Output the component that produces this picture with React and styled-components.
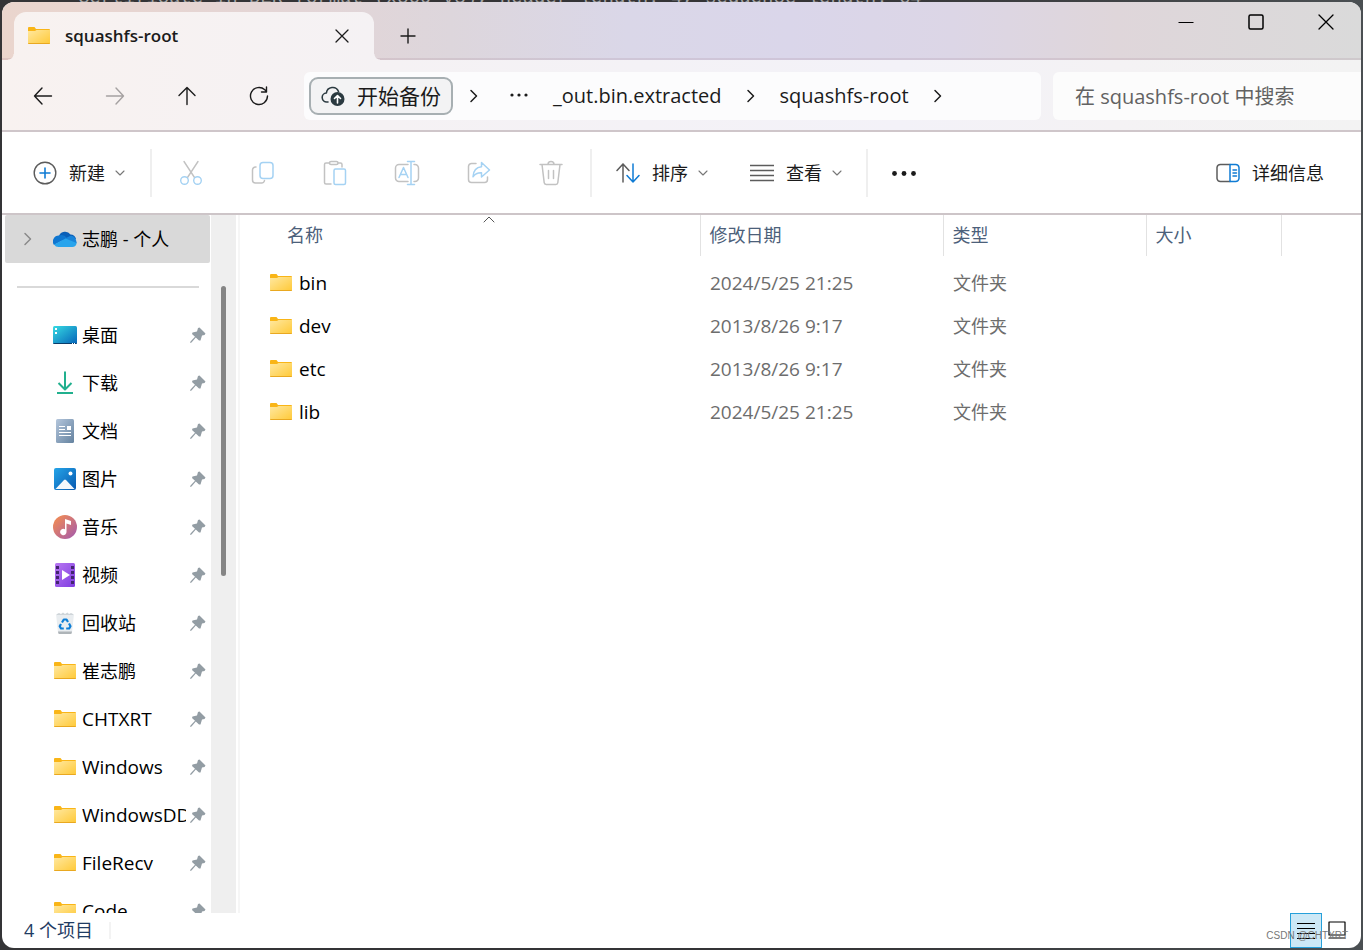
import React, { useState } from 'react';
import styled, { createGlobalStyle } from 'styled-components';

const GlobalStyle = createGlobalStyle`
* {
  box-sizing: border-box;
}
body {
  margin: 0;
  font-family: 'Open Sans', 'Noto Sans CJK SC', sans-serif;
  font-size: 18px;
  line-height: 24px;
  color: #1b1b1b;
}
button, input {
  font: inherit;
  color: inherit;
}
svg {
  display: block;
  flex: none;
}
`;

const Desktop = styled.div`
position: relative;
display: flex;
height: 100vh;
padding: 2px;
overflow: hidden;
background: linear-gradient(90deg, #343436 60%, #4a4f52);
`;

const TerminalLine = styled.div`
position: absolute;
top: -12px;
left: 78px;
font-family: 'Liberation Mono', monospace;
font-size: 19px;
line-height: 20px;
white-space: nowrap;
color: #a5a5a5;
`;

const Window = styled.div`
position: relative;
flex: 1;
min-width: 0;
display: flex;
flex-direction: column;
overflow: hidden;
border-radius: 12px;
background: #fff;
`;

const TabStrip = styled.header`
display: flex;
height: 58px;
padding: 10px 0 0 12px;
background: linear-gradient(90deg, #ead5cd 0%, #e3d5d6 22%, #ddd6dc 33%, #dad7e8 46%, #dad6ea 58%, #dcd6e6 70%, #dfd6da 82%, #dadada 100%);
box-shadow: inset 0 -2px rgba(150, 110, 130, 0.16);
`;

const Tab = styled.div`
position: relative;
display: flex;
align-items: center;
width: 360px;
padding: 0 12px 0 13px;
border-radius: 12px 12px 0 0;
background: linear-gradient(90deg, #f8f2f0, #f5f2f4);
&::before, &::after {
  content: '';
  position: absolute;
  bottom: 0;
  width: 6px;
  height: 6px;
}
&::before {
  right: 100%;
  background: radial-gradient(circle at 0 0, transparent 5px, #f8f2f0 6px);
}
&::after {
  left: 100%;
  background: radial-gradient(circle at 100% 0, transparent 5px, #f5f2f4 6px);
}
`;

const TabTitle = styled.span`
flex: 1;
margin-left: 14px;
font-size: 17px;
font-weight: 600;
`;

const IconButton = styled.button`
display: flex;
align-items: center;
justify-content: center;
flex: none;
width: ${({ $width }) => $width || 40}px;
height: ${({ $height }) => $height || 40}px;
padding: 0;
border: 0;
background: none;
`;

const Caption = styled.div`
display: flex;
margin-left: auto;
margin-top: -10px;
`;

const NavBar = styled.nav`
display: flex;
align-items: center;
height: 72px;
padding: 2px 0 0 5px;
border-bottom: 2px solid #cfc6ca;
background: linear-gradient(90deg, #f8f2f0 0%, #f5f2f4 28%, #f3f2f8 66%, #f4f2f4 82%, #f3f3f3 100%);
`;

const Address = styled.div`
flex: 1;
min-width: 0;
display: flex;
align-items: center;
height: 48px;
margin: 0 12px 0 9px;
padding-left: 5px;
border-radius: 6px;
overflow: hidden;
white-space: nowrap;
background: #fcfcfd;
`;

const Backup = styled.button`
display: flex;
align-items: center;
gap: 10px;
height: 38px;
padding: 0 10px;
border: 2px solid #a7afb2;
border-radius: 9px;
font-size: 21px;
background: #f3f3f4;
`;

const Crumb = styled.a`
margin: 0 10px;
font-size: 20px;
line-height: 28px;
color: inherit;
text-decoration: none;
`;

const Search = styled.input`
width: 308px;
height: 48px;
padding: 0 22px;
border: 0;
border-radius: 6px 0 0 6px;
font-size: 20px;
background: #fcfcfc;
&::placeholder {
  color: #626262;
  opacity: 1;
}
`;

const Toolbar = styled.div`
display: flex;
align-items: center;
height: 83px;
padding: 0 25px 0 19px;
border-bottom: 2px solid #cdc5c8;
background: #fff;
`;

const Command = styled.button`
display: flex;
align-items: center;
gap: 12px;
height: 48px;
padding: 0 12px;
border: 0;
white-space: nowrap;
background: none;
`;

const ViewCommand = styled(Command)`
margin-left: 18px;
`;

const DropCaret = styled.span`
margin-left: -2px;
`;

const Separator = styled.span`
width: 2px;
height: 48px;
margin: 0 ${({ $right }) => $right}px 0 ${({ $left }) => $left}px;
background: #efefef;
`;

const Spacer = styled.span`
flex: 1;
`;

const Body = styled.div`
flex: 1;
min-height: 0;
display: flex;
`;

const Sidebar = styled.aside`
display: flex;
flex: none;
width: 238px;
overflow: hidden;
border-right: 2px solid #f6f6f6;
`;

const Tree = styled.ul`
flex: 1;
min-width: 0;
margin: 0;
padding: 0 1px 0 3px;
list-style: none;
`;

const TreeItem = styled.li`
display: flex;
align-items: center;
height: 48px;
padding: 0 4px 0 18px;
border-radius: 2px;
background: ${({ $selected }) => ($selected ? '#d9d9d9' : 'none')};
`;

const TreeLink = styled.a`
flex: 1;
min-width: 0;
display: flex;
align-items: center;
gap: 5px;
margin: 0 4px 0 18px;
font-size: ${({ $latin }) => ($latin ? 19 : 18)}px;
color: #000;
text-decoration: none;
`;

const TreeLabel = styled.span`
flex: 1;
overflow: hidden;
white-space: nowrap;
`;

const TreeArrow = styled.span`
width: 12px;
`;

const TreeDivider = styled.li`
height: 48px;
padding: 23px 11px 0 12px;
&::before {
  content: '';
  display: block;
  height: 2px;
  background: #d9d9d9;
}
`;

const ScrollTrack = styled.div`
width: 25px;
margin-right: 2px;
padding: 71px 10px 0;
background: #efefef;
`;

const ScrollThumb = styled.div`
height: 290px;
border-radius: 3px;
background: #858585;
`;

const Main = styled.main`
flex: 1;
min-width: 0;
overflow: hidden;
`;

const FileTable = styled.table`
width: 100%;
table-layout: fixed;
border-collapse: collapse;
`;

const Col = styled.col`
width: ${({ $width }) => ($width ? `${$width}px` : 'auto')};
`;

const HeadCell = styled.th`
position: relative;
height: 41px;
padding: 0 0 2px ${({ $first }) => ($first ? 47 : 9)}px;
border-right: ${({ $last }) => ($last ? '0' : '1px solid #e2e2e2')};
text-align: left;
font-weight: 400;
color: #4c607a;
`;

const SortMark = styled.span`
position: absolute;
top: 1px;
left: 39px;
right: 0;
display: flex;
justify-content: center;
`;

const HeadGap = styled.tr`
height: 5px;
`;

const Cell = styled.td`
height: 43px;
padding: 0 0 0 ${({ $first }) => ($first ? 29 : 10)}px;
font-size: ${({ $latin }) => ($latin ? 19 : 18)}px;
white-space: nowrap;
color: #6d6d6d;
`;

const FileName = styled.a`
display: flex;
align-items: center;
gap: 6px;
color: #000;
text-decoration: none;
`;

const StatusBar = styled.footer`
display: flex;
align-items: center;
height: 35px;
padding: 0 9px 0 22px;
color: #1f3c63;
`;

const StatusText = styled.span`
padding-bottom: 2px;
`;

const StatusSeparator = styled.span`
width: 2px;
height: 17px;
margin-left: 16px;
background: #f3f3f3;
`;

const ViewButton = styled.button`
display: flex;
align-items: center;
justify-content: center;
width: ${({ $active }) => ($active ? 32 : 30)}px;
height: 35px;
padding: 0 0 2px;
border: ${({ $active }) => ($active ? '1px solid #26a0da' : '0')};
background: ${({ $active }) => ($active ? '#cce8f6' : 'none')};
`;

const Watermark = styled.span`
position: absolute;
right: 13px;
bottom: 4px;
font-family: 'Liberation Sans', sans-serif;
font-size: 10px;
line-height: 16px;
color: #777;
`;

const Icon = ({ size = 24, width, height, children, ...rest }) => (
  <svg
    width={width || size}
    height={height || size}
    viewBox={`0 0 ${width || size} ${height || size}`}
    fill="none"
    stroke="#1b1b1b"
    strokeWidth="1.4"
    strokeLinecap="round"
    strokeLinejoin="round"
    aria-hidden="true"
    {...rest}
  >
    {children}
  </svg>
);

const FolderIcon = () => (
  <Icon width={24} height={20} stroke="none">
    <defs>
      <linearGradient id="folder" x1="0" y1="0" x2="1" y2="1">
        <stop offset="0" stopColor="#ffe8a0" />
        <stop offset="1" stopColor="#ffc937" />
      </linearGradient>
    </defs>
    <path d="M1 2a1 1 0 0 1 1-1h5.500l1.500 2H22a1 1 0 0 1 1 1V7H1z" fill="#f9b517" />
    <path d="M1 5h7l1.500-1h13.500v13a1 1 0 0 1-1 1H2a1 1 0 0 1-1-1z" fill="url(#folder)" />
    <path d="M1 17h22a1 1 0 0 1-1 1H2a1 1 0 0 1-1-1z" fill="#e9a820" />
  </Icon>
);

const Chevron = ({ color = '#1b1b1b' }) => (
  <Icon width={10} height={14} stroke={color} strokeWidth="1.5"><path d="M2 1.500L7.500 7L2 12.500" /></Icon>
);

const DownCaret = () => (
  <DropCaret>
    <Icon width={10} height={6} stroke="#777" strokeWidth="1.1"><path d="M1 1l4 4l4-4" /></Icon>
  </DropCaret>
);

const CloudIcon = () => (
  <Icon size={24} stroke="none">
    <path d="M6 9a6.500 6.500 0 0 1 11.500-1.500A6 6 0 0 1 23 12l-8 3L3 12z" fill="#0a5fb8" />
    <path d="M6 8.500a6 6 0 0 0-5 9.500l13-7a7 7 0 0 0-8-2.500z" fill="#0f76d0" />
    <path d="M12 11.500l5-2.500a5 5 0 0 1 6 4l.8 3-5 2z" fill="#1784da" />
    <path d="M1 17.500L12.500 11.500L23.600 16a4.500 4.500 0 0 1-4.600 4H6a5.500 5.500 0 0 1-5-2.500z" fill="#28a4ec" />
  </Icon>
);

const DesktopIcon = () => (
  <Icon size={24} stroke="none">
    <defs>
      <linearGradient id="desktop" x1="0" y1="0" x2="1" y2="1">
        <stop offset="0" stopColor="#36dbe3" />
        <stop offset="1" stopColor="#0563b8" />
      </linearGradient>
    </defs>
    <rect y="3" width="24" height="18" rx="1.500" fill="url(#desktop)" />
    <path d="M0 20h24a1.500 1.500 0 0 1-1.500 1h-21A1.500 1.500 0 0 1 0 20z" fill="#0a3d69" />
    <path d="M2 5h2v2H2zM2 9h2v2H2zM19 20h1v1h-1zM21 20h1v1h-1z" fill="#fff" />
  </Icon>
);

const DownloadIcon = () => (
  <Icon size={24} stroke="#21b08e" strokeWidth="2" strokeLinecap="butt">
    <path d="M12 0.500v18M5.500 12L12 18.500l6.500-6.500M4 22h16" />
  </Icon>
);

const DocumentIcon = () => (
  <Icon size={24} stroke="none">
    <defs>
      <linearGradient id="doc" x1="0" y1="0" x2="1" y2="1">
        <stop offset="0" stopColor="#b4c6dc" />
        <stop offset="1" stopColor="#64829f" />
      </linearGradient>
    </defs>
    <rect x="3" width="18" height="24" rx="1.500" fill="url(#doc)" />
    <path d="M6 7h6v1H6zM6 10h6v1H6zM6 13h12v1H6zM6 16h12v1H6zM14 7h4v4h-4z" fill="#fff" />
  </Icon>
);

const PictureIcon = () => (
  <Icon size={24} stroke="none">
    <defs>
      <linearGradient id="pic" x1="0" y1="0" x2="1" y2="1">
        <stop offset="0" stopColor="#25a4e8" />
        <stop offset="1" stopColor="#0759b0" />
      </linearGradient>
    </defs>
    <rect x="1" y="1" width="22" height="22" rx="2" fill="url(#pic)" />
    <path d="M2.500 22L11 13a1.500 1.500 0 0 1 2 0l8.500 9z" fill="#f2f7fc" />
    <circle cx="17.500" cy="6.500" r="2" fill="#fff" />
  </Icon>
);

const MusicIcon = () => (
  <Icon size={24} stroke="none">
    <defs>
      <linearGradient id="music" x1="0" y1="0" x2="1" y2="1">
        <stop offset="0.1" stopColor="#f08a55" />
        <stop offset="0.9" stopColor="#aa5ea6" />
      </linearGradient>
    </defs>
    <circle cx="12" cy="12" r="12" fill="url(#music)" />
    <path d="M12 4l6 2v4l-4.500-1.500V17a3.200 3.200 0 1 1-1.500-2.700z" fill="#fff" />
  </Icon>
);

const VideoIcon = () => (
  <Icon size={24} stroke="none">
    <defs>
      <linearGradient id="video" x1="0" y1="0" x2="1" y2="1">
        <stop offset="0" stopColor="#b877f2" />
        <stop offset="1" stopColor="#7f3de0" />
      </linearGradient>
    </defs>
    <rect x="2" width="20" height="24" rx="1.500" fill="url(#video)" />
    <path
      d="M3 3h3v3H3zM3 8h3v3H3zM3 13h3v3H3zM3 18h3v3H3zM18 3h3v3h-3zM18 8h3v3h-3zM18 13h3v3h-3zM18 18h3v3h-3z"
      fill="#43256f"
    />
    <path d="M9 7l8 5-8 5z" fill="#fff" />
  </Icon>
);

const RecycleIcon = () => (
  <Icon size={24} stroke="none">
    <path d="M3 3h18l-2 18.500a1.500 1.500 0 0 1-1.500 1.500h-11A1.500 1.500 0 0 1 5 21.500z" fill="#e9edf0" />
    <path d="M5 20.500h14l-.3 1.500a1.200 1.200 0 0 1-1.200 1h-11a1.200 1.200 0 0 1-1.200-1z" fill="#aeb4b8" />
    <path d="M4 3l2-1 2 1 2-1.500L12 3l2.500-1.500L16 3l2-1 2 1v1H4z" fill="#cfd5d9" />
    <path
      d="M9 11.500L10.800 8.500h2.700L15 11M16 12.500l1.500 2.700-1.300 2.300h-3M10.800 17.500H8l-1.300-2.300L8 13"
      stroke="#0e7ed6"
      strokeWidth="2.200"
      strokeLinecap="butt"
    />
  </Icon>
);

const PinIcon = () => (
  <Icon size={16} stroke="none">
    <path d="M9.500 0.500L15.500 6.500L14.500 8L12 8.500L10.500 13.500L9 13.500L5.800 10.500L1.500 15.500L0 16L0.500 14.500L5 9.800L2 7L2.500 5.500L7 4.500L8 1z" fill="#939da4" />
  </Icon>
);

const BackupIcon = () => (
  <Icon size={26} stroke="#2b3a40" strokeWidth="1.600">
    <path d="M7 19H6a4.500 4.500 0 0 1-.6-9A6.300 6.300 0 0 1 17.500 8.500" />
    <circle cx="16.500" cy="16" r="7" fill="#2b3a40" stroke="none" />
    <path d="M16.500 20v-7M13.500 15.500l3-3l3 3" stroke="#fff" />
  </Icon>
);

const places = [
  { name: '桌面', icon: <DesktopIcon /> },
  { name: '下载', icon: <DownloadIcon /> },
  { name: '文档', icon: <DocumentIcon /> },
  { name: '图片', icon: <PictureIcon /> },
  { name: '音乐', icon: <MusicIcon /> },
  { name: '视频', icon: <VideoIcon /> },
  { name: '回收站', icon: <RecycleIcon /> },
  { name: '崔志鹏', icon: <FolderIcon /> },
  { name: 'CHTXRT', icon: <FolderIcon />, latin: true },
  { name: 'Windows', icon: <FolderIcon />, latin: true },
  { name: 'WindowsDDK', icon: <FolderIcon />, latin: true },
  { name: 'FileRecv', icon: <FolderIcon />, latin: true },
  { name: 'Code', icon: <FolderIcon />, latin: true },
];

const files = [
  { name: 'bin', date: '2024/5/25 21:25' },
  { name: 'dev', date: '2013/8/26 9:17' },
  { name: 'etc', date: '2013/8/26 9:17' },
  { name: 'lib', date: '2024/5/25 21:25' },
];

const TitleTabs = () => (
  <TabStrip>
    <Tab>
      <FolderIcon />
      <TabTitle>squashfs-root</TabTitle>
      <IconButton aria-label="关闭标签页">
        <Icon size={14} strokeWidth="1.300"><path d="M1 1l12 12M13 1L1 13" /></Icon>
      </IconButton>
    </Tab>
    <IconButton aria-label="新标签页" $width={68} $height={48}>
      <Icon size={16} strokeWidth="1.400"><path d="M8 1v14M1 8h14" /></Icon>
    </IconButton>
    <Caption>
      <IconButton aria-label="最小化" $width={70}>
        <Icon size={16} stroke="#000" strokeWidth="1" strokeLinecap="butt"><path d="M0.500 8.500h15" /></Icon>
      </IconButton>
      <IconButton aria-label="最大化" $width={70}>
        <Icon size={16} stroke="#000" strokeWidth="1.500"><rect x="1" y="1" width="14" height="14" rx="1.500" /></Icon>
      </IconButton>
      <IconButton aria-label="关闭" $width={70}>
        <Icon size={16} stroke="#000" strokeWidth="1.300"><path d="M1 1l14 14M15 1L1 15" /></Icon>
      </IconButton>
    </Caption>
  </TabStrip>
);

const Navigation = () => (
  <NavBar>
    <IconButton aria-label="后退" $width={72}>
      <Icon size={20}><path d="M18.500 10h-17M9 2L1.500 10L9 18" /></Icon>
    </IconButton>
    <IconButton aria-label="前进" $width={72}>
      <Icon size={20} stroke="#a5a1a1"><path d="M1.500 10h17M11 2l7.500 8L11 18" /></Icon>
    </IconButton>
    <IconButton aria-label="向上" $width={72}>
      <Icon size={20}><path d="M10 18.500v-17M2 9.500L10 1.500L18 9.500" /></Icon>
    </IconButton>
    <IconButton aria-label="刷新" $width={72}>
      <Icon size={20}><path d="M18.500 10a8.500 8.500 0 1 1-2.700-6.200L17.500 5.500M17.500 1v5h-5" /></Icon>
    </IconButton>
    <Address>
      <Backup>
        <BackupIcon />
        开始备份
      </Backup>
      <IconButton aria-label="展开" $width={42}><Chevron /></IconButton>
      <IconButton aria-label="更多位置" $width={48}>
        <Icon width={18} height={8} stroke="none">
          <circle cx="2" cy="3" r="1.600" fill="#1b1b1b" />
          <circle cx="9" cy="3" r="1.600" fill="#1b1b1b" />
          <circle cx="16" cy="3" r="1.600" fill="#1b1b1b" />
        </Icon>
      </IconButton>
      <Crumb href="#extracted">_out.bin.extracted</Crumb>
      <IconButton aria-label="展开" $width={38}><Chevron /></IconButton>
      <Crumb href="#squashfs-root">squashfs-root</Crumb>
      <IconButton aria-label="展开" $width={38}><Chevron /></IconButton>
    </Address>
    <Search type="search" aria-label="搜索" placeholder="在 squashfs-root 中搜索" />
  </NavBar>
);

const Commands = () => (
  <Toolbar>
    <Command>
      <Icon size={24} stroke="#5c5c5c">
        <circle cx="12" cy="12" r="10.800" />
        <path d="M12 7v10M7 12h10" stroke="#0f7bd4" strokeWidth="1.600" />
      </Icon>
      新建
      <DownCaret />
    </Command>
    <Separator $left={13} $right={3} />
    <IconButton aria-label="剪切" $width={72}>
      <Icon size={26} stroke="#c2c2c2" strokeWidth="1.400">
        <path d="M6 1.500L16.500 17.500M20 1.500L9.500 17.500" />
        <circle cx="6.500" cy="20.500" r="3.800" stroke="#a5d2f3" />
        <circle cx="19.500" cy="20.500" r="3.800" stroke="#a5d2f3" />
      </Icon>
    </IconButton>
    <IconButton aria-label="复制" $width={72}>
      <Icon size={24} stroke="#c2c2c2" strokeWidth="1.500">
        <path d="M5 6H4.500A3 3 0 0 0 1.500 9v10a3 3 0 0 0 3 3h6a3 3 0 0 0 3-2.500" />
        <rect x="9" y="1.500" width="13" height="16" rx="3" stroke="#a5d2f3" />
      </Icon>
    </IconButton>
    <IconButton aria-label="粘贴" $width={72}>
      <Icon size={26} stroke="#c2c2c2" strokeWidth="1.500">
        <path d="M9 24H4a1.500 1.500 0 0 1-1.500-1.500v-18A1.500 1.500 0 0 1 4 3h3M16 3h2.500A1.500 1.500 0 0 1 20 4.500V7" />
        <rect x="7.500" y="1.500" width="8.500" height="3" rx="1.500" />
        <rect x="12" y="9" width="11.500" height="15.500" rx="1.500" stroke="#a5d2f3" />
      </Icon>
    </IconButton>
    <IconButton aria-label="重命名" $width={72}>
      <Icon size={26} stroke="#c2c2c2" strokeWidth="1.500">
        <path d="M14 4.500H5A3.500 3.500 0 0 0 1.500 8v10A3.500 3.500 0 0 0 5 21.500h9M20 4.500h1A3.500 3.500 0 0 1 24.500 8v10a3.500 3.500 0 0 1-3.500 3.500h-1" />
        <path d="M17 1.500v23M13.500 1.500h7M13.500 24.500h7M5 17.500l4.500-10l4.500 10M6.500 14.500h6" stroke="#a5d2f3" />
      </Icon>
    </IconButton>
    <IconButton aria-label="共享" $width={72}>
      <Icon size={24} stroke="#c2c2c2" strokeWidth="1.500">
        <path d="M9 2.500H4.500a3 3 0 0 0-3 3v13a3 3 0 0 0 3 3h13a3 3 0 0 0 3-3V16" />
        <path d="M14.500 1.500l8 7.500l-8 7v-4.200c-4-.2-6.500 1.200-8.500 4c.3-5.500 3-9.500 8.500-10z" stroke="#a5d2f3" />
      </Icon>
    </IconButton>
    <IconButton aria-label="删除" $width={72}>
      <Icon size={26} stroke="#c2c2c2" strokeWidth="1.500">
        <path d="M2 4.500h22M4 4.500l2.200 18.200a2 2 0 0 0 2 1.800h9.600a2 2 0 0 0 2-1.800L22 4.500M10 4.500a3 3 0 0 1 6 0M10.500 10.500v8M15.500 10.500v8" />
      </Icon>
    </IconButton>
    <Separator $left={3} $right={12} />
    <Command>
      <Icon size={24} stroke="#5c5c5c" strokeWidth="1.500">
        <path d="M7 21V3M1 9.500L7 3L13 9.500" />
        <path d="M17 3v18M11 14.500l6 6.500l6-6.500" stroke="#0f7bd4" />
      </Icon>
      排序
      <DownCaret />
    </Command>
    <ViewCommand>
      <Icon size={24} stroke="#5c5c5c" strokeWidth="1.400" strokeLinecap="butt">
        <path d="M0 4.500h24M0 9.500h24M0 14.500h24M0 19.500h24" />
      </Icon>
      查看
      <DownCaret />
    </ViewCommand>
    <Separator $left={12} $right={12} />
    <IconButton aria-label="更多" $width={48}>
      <Icon width={24} height={6} stroke="none">
        <circle cx="2.500" cy="3.500" r="2.400" fill="#1b1b1b" />
        <circle cx="12" cy="3.500" r="2.400" fill="#1b1b1b" />
        <circle cx="21.500" cy="3.500" r="2.400" fill="#1b1b1b" />
      </Icon>
    </IconButton>
    <Spacer />
    <Command>
      <Icon size={24} stroke="#5c5c5c" strokeWidth="1.500">
        <path d="M14 3.500H4.500a3.500 3.500 0 0 0-3.500 3v11a3.500 3.500 0 0 0 3.500 3H14" />
        <path d="M14 3.500h5.500a3.500 3.500 0 0 1 3.500 3v11a3.500 3.500 0 0 1-3.500 3H14zM17 9h3.500M17 12h3.500M17 15h3.500" stroke="#0f7bd4" />
      </Icon>
      详细信息
    </Command>
  </Toolbar>
);

const Places = () => (
  <Sidebar>
    <Tree>
      <TreeItem $selected>
        <TreeArrow><Chevron color="#8a8a8a" /></TreeArrow>
        <TreeLink href="#onedrive">
          <CloudIcon />
          <TreeLabel>志鹏 - 个人</TreeLabel>
        </TreeLink>
      </TreeItem>
      <TreeDivider />
      {places.map(({ name, icon, latin }) => (
        <TreeItem key={name}>
          <TreeArrow />
          <TreeLink href={`#${name}`} $latin={latin}>
            {icon}
            <TreeLabel>{name}</TreeLabel>
          </TreeLink>
          <PinIcon />
        </TreeItem>
      ))}
    </Tree>
    <ScrollTrack>
      <ScrollThumb />
    </ScrollTrack>
  </Sidebar>
);

const FileList = () => (
  <Main>
    <FileTable>
      <colgroup>
        <Col $width={460} />
        <Col $width={243} />
        <Col $width={203} />
        <Col $width={135} />
        <Col />
      </colgroup>
      <thead>
        <tr>
          <HeadCell $first>
            名称
            <SortMark>
              <Icon width={12} height={7} stroke="#555" strokeWidth="1"><path d="M1 6l5-5l5 5" /></Icon>
            </SortMark>
          </HeadCell>
          <HeadCell>修改日期</HeadCell>
          <HeadCell>类型</HeadCell>
          <HeadCell>大小</HeadCell>
          <HeadCell $last />
        </tr>
      </thead>
      <tbody>
        <HeadGap />
        {files.map(({ name, date }) => (
          <tr key={name}>
            <Cell $first $latin>
              <FileName href={`#${name}`}>
                <FolderIcon />
                {name}
              </FileName>
            </Cell>
            <Cell $latin>{date}</Cell>
            <Cell>文件夹</Cell>
            <Cell />
            <Cell />
          </tr>
        ))}
      </tbody>
    </FileTable>
  </Main>
);

const Status = () => {
  const [view, setView] = useState('details');

  return (
    <StatusBar>
      <StatusText>{files.length} 个项目</StatusText>
      <StatusSeparator />
      <Spacer />
      <ViewButton aria-label="详细信息视图" $active={view === 'details'} onClick={() => setView('details')}>
        <Icon width={18} height={18} stroke="#000" strokeWidth="1" strokeLinecap="butt">
          <path d="M0 2.500h18M0 7.500h18M0 12.500h18M0 17.500h18" />
        </Icon>
      </ViewButton>
      <ViewButton aria-label="大图标视图" $active={view === 'icons'} onClick={() => setView('icons')}>
        <Icon width={18} height={18} stroke="#000" strokeWidth="1.200">
          <path d="M1 1h16v13H1zM1 17h16" />
        </Icon>
      </ViewButton>
    </StatusBar>
  );
};

const App = () => (
  <Desktop>
    <GlobalStyle />
    <TerminalLine aria-hidden="true">
      Certificate in DER format (x509 v3), header length: 4, sequence length: 64
    </TerminalLine>
    <Window>
      <TitleTabs />
      <Navigation />
      <Commands />
      <Body>
        <Places />
        <FileList />
      </Body>
      <Status />
      <Watermark>CSDN @CHTXRT</Watermark>
    </Window>
  </Desktop>
);

export default App;
